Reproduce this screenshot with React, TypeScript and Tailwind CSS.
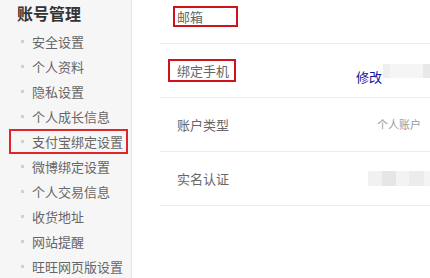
import React from "react";

const items = [
  "安全设置",
  "个人资料",
  "隐私设置",
  "个人成长信息",
  "支付宝绑定设置",
  "微博绑定设置",
  "个人交易信息",
  "收货地址",
  "网站提醒",
  "旺旺网页版设置",
];

export default function App() {
  return (
    <div className="flex w-[430px] h-[278px] overflow-hidden bg-white font-['Noto_Sans_CJK_SC',sans-serif]">
      <aside className="w-[132px] shrink-0 bg-[#f6f6f6] border-r border-[#e3e3e3]">
        <h2 className="pl-[17px] pt-[3px] mb-[6px] text-[16px] leading-[20px] font-bold text-[#333]">
          账号管理
        </h2>
        <ul>
          {items.map((t, i) => (
            <li
              key={t}
              className={
                i === 4
                  ? "ml-[9px] w-[119px] h-[25px] flex items-center gap-[8px] pl-[10px] border-2 border-[#e0262b] text-[13px] leading-none text-[#666] whitespace-nowrap"
                  : "ml-[9px] w-[119px] h-[25px] flex items-center gap-[8px] pl-[10px] border-2 border-transparent text-[13px] leading-none text-[#666] whitespace-nowrap"
              }
            >
              <span className="w-[3px] h-[3px] bg-[#cfcfcf] shrink-0" />
              {t}
            </li>
          ))}
        </ul>
      </aside>
      <main className="flex-1 pl-[28px]">
        <div className="-mt-[10px]">
          <div className="h-[54px] border-b border-[#ececec] flex items-center">
            <div className="ml-[13px] w-[65px] h-[21px] border-2 border-[#d0121b] pl-[2px] flex items-center text-[13px] leading-none text-[#666]">
              邮箱
            </div>
          </div>
          <div className="h-[54px] border-b border-[#ececec] flex items-center">
            <div className="ml-[8px] w-[68px] h-[23px] border-2 border-[#d0121b] pl-[7px] flex items-center text-[13px] leading-none text-[#666] whitespace-nowrap">
              绑定手机
            </div>
            <div className="ml-auto flex items-center">
              <span className="mt-[12px] text-[13px] leading-none text-[#11119a]">修改</span>
              <div className="ml-[1px] flex h-[14px]">
                <span className="w-[7px] bg-[#efefef]" />
                <span className="w-[33px] bg-[#f5f5f5]" />
                <span className="w-[7px] bg-[#e8e8e8]" />
              </div>
            </div>
          </div>
          <div className="h-[54px] border-b border-[#ececec] flex items-center">
            <span className="pl-[17px] text-[13px] leading-none text-[#666]">账户类型</span>
            <span className="ml-auto mr-[9px] text-[11px] leading-none text-[#9a9a9a]">个人账户</span>
          </div>
          <div className="h-[54px] border-b border-[#ececec] flex items-center">
            <span className="pl-[17px] text-[13px] leading-none text-[#666]">实名认证</span>
            <div className="ml-auto flex h-[15px]">
              <span className="w-[14px] bg-[#f1f1f1]" />
              <span className="w-[14px] bg-[#e6e6e6]" />
              <span className="w-[13px] bg-[#f3f3f3]" />
              <span className="w-[15px] bg-[#ececec]" />
              <span className="w-[6px] bg-[#f4f4f4]" />
            </div>
          </div>
        </div>
      </main>
    </div>
  );
}
